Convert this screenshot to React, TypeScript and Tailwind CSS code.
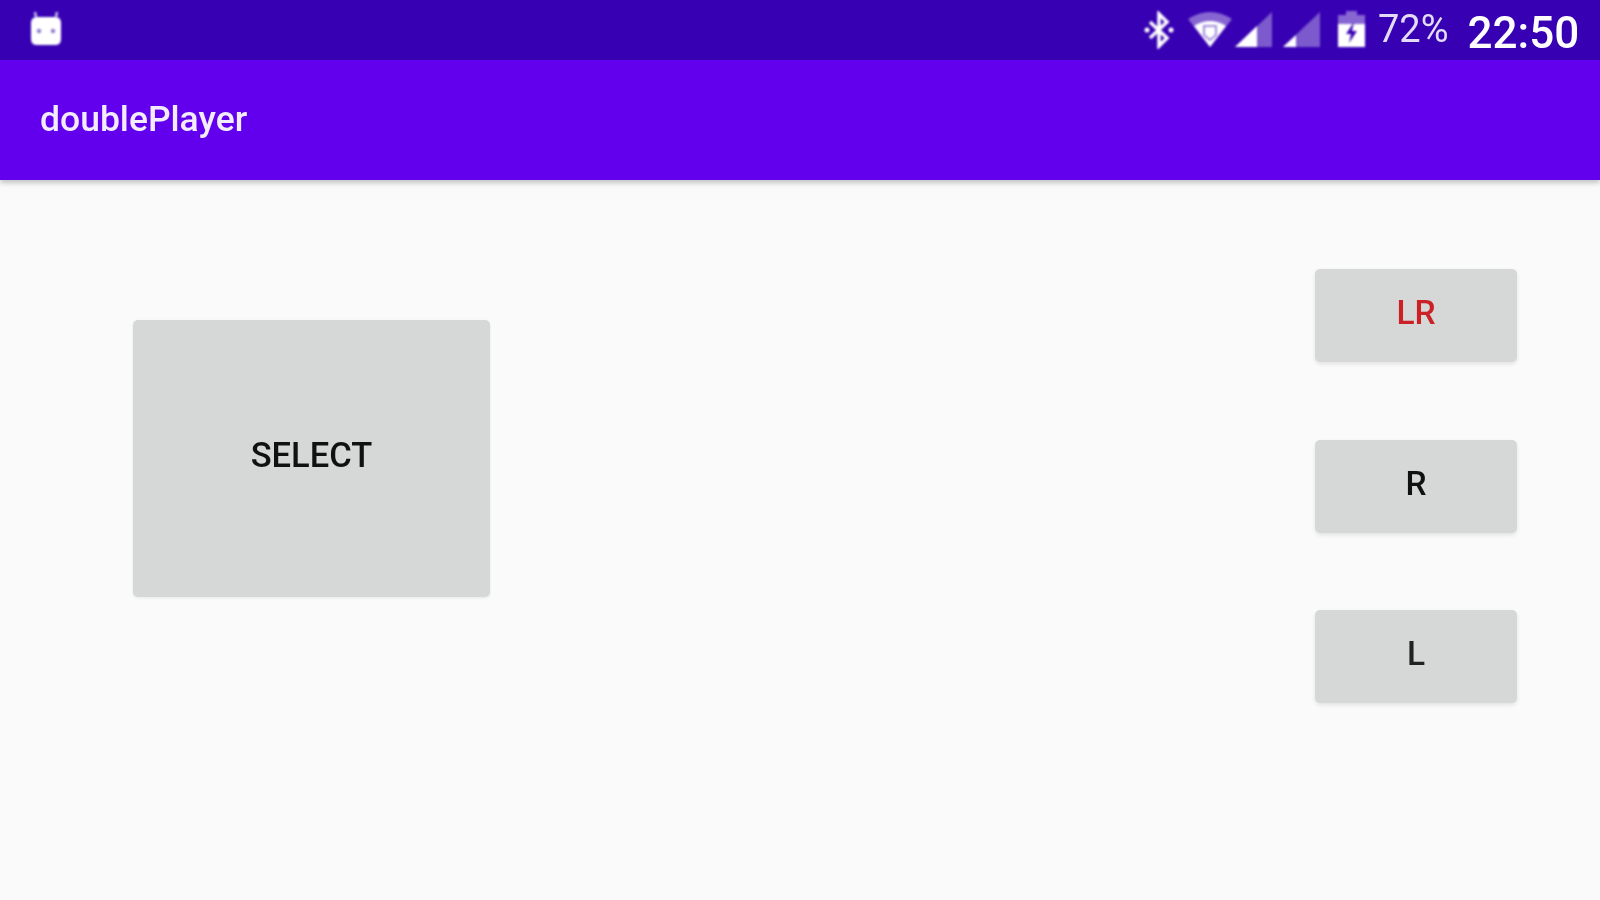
const StatusIcons = () => (
  <div className="flex items-center">
    {/* bluetooth */}
    <svg className="ml-[1143px] h-[38px] w-[32px] blur-[0.8px]" viewBox="0 0 32 38" fill="none" stroke="white" strokeWidth="3.5">
      <path d="M7 11 L24 27 L16 35 V3 L24 11 L7 27" />
      <circle cx="4" cy="19" r="2.5" fill="white" stroke="none" />
      <circle cx="28" cy="19" r="2.5" fill="white" stroke="none" />
    </svg>
    {/* wifi */}
    <svg className="ml-[13px] h-[38px] w-[44px] blur-[0.8px]" viewBox="0 0 44 38">
      <path d="M0 8 Q22 -6 44 8 L22 36 Z" fill="white" fillOpacity="0.4" />
      <path d="M6 15 Q22 5 38 15 L22 36 Z" fill="white" />
      <path d="M16 15 H28 V24 L22 29 L16 24 Z" fill="none" stroke="#3700b3" strokeOpacity="0.45" strokeWidth="2" />
    </svg>
    {/* signal 1 */}
    <svg className="ml-[3px] h-[38px] w-[37px] blur-[0.8px]" viewBox="0 0 37 38">
      <path d="M0 36 L37 1 V36 Z" fill="white" fillOpacity="0.35" />
      <path d="M0 36 L22 15 V36 Z" fill="white" />
    </svg>
    {/* signal 2 */}
    <svg className="ml-[11px] h-[38px] w-[37px] blur-[0.8px]" viewBox="0 0 37 38">
      <path d="M0 36 L37 1 V36 Z" fill="white" fillOpacity="0.35" />
      <path d="M0 36 L13 24 V36 Z" fill="white" />
    </svg>
    {/* battery */}
    <svg className="ml-[18px] h-[38px] w-[27px] blur-[0.8px]" viewBox="0 0 27 38">
      <path d="M8 0 H19 V4 H27 V14 H0 V4 H8 Z" fill="white" fillOpacity="0.4" />
      <path d="M0 13 H27 V36 H0 Z" fill="white" />
      <path d="M16 11 L8 23 H13 L11 32 L19 20 H14 Z" fill="#3700b3" />
    </svg>
    <span className="ml-[13px] -mt-[3px] text-[38px] leading-none text-[#e4dcf6] blur-[0.7px]">72%</span>
    <span className="ml-[19px] mt-[6px] text-[44px] leading-none font-medium text-white blur-[0.7px]">22:50</span>
  </div>
);

const SideButton = ({ label, color }: { label: string; color: string }) => (
  <button className="flex h-[93px] w-[202px] items-center justify-center rounded-[5px] bg-[#d6d7d7] shadow-[0_2px_4px_rgba(0,0,0,0.1)]">
    <span className={`-mt-[4px] text-[33.5px] font-medium blur-[0.7px] ${color}`}>{label}</span>
  </button>
);

export default function App() {
  return (
    <div className="flex h-[900px] w-[1600px] flex-col overflow-hidden bg-[#fafafa] font-['Roboto',sans-serif]">
      <div className="flex h-[60px] items-center bg-[#3700b3]">
        <svg className="absolute left-[30px] top-[11px] h-[35px] w-[32px] blur-[0.8px]" viewBox="0 0 32 35">
          <path d="M6 6 L5 1 M26 6 L27 1" stroke="#c9bdf0" strokeWidth="2.5" />
          <path d="M7 6 H25 Q31 6 31 12 V28 Q31 34 25 34 H7 Q1 34 1 28 V12 Q1 6 7 6 Z" fill="white" />
          <circle cx="9" cy="20" r="2.2" fill="#8f7ad0" />
          <circle cx="23" cy="20" r="2.2" fill="#8f7ad0" />
        </svg>
        <StatusIcons />
      </div>
      <div className="flex h-[120px] items-center bg-[#6200ee] pl-[40px] shadow-[0_3px_5px_rgba(0,0,0,0.22)]">
        <h1 className="text-[35.5px] font-medium text-[#f3ecfd] blur-[0.7px]">doublePlayer</h1>
      </div>
      <div className="flex justify-between pl-[133px] pr-[83px]">
        <button className="mt-[140px] flex h-[277px] w-[357px] items-center justify-center rounded-[5px] bg-[#d6d8d8] shadow-[0_1px_3px_rgba(0,0,0,0.08)]">
          <span className="-mt-[5px] text-[34.5px] font-medium text-[#111] blur-[0.7px]">SELECT</span>
        </button>
        <div className="mt-[89px] flex flex-col gap-[77.5px]">
          <SideButton label="LR" color="text-[#cc2027]" />
          <SideButton label="R" color="text-[#111]" />
          <SideButton label="L" color="text-[#222]" />
        </div>
      </div>
    </div>
  );
}
